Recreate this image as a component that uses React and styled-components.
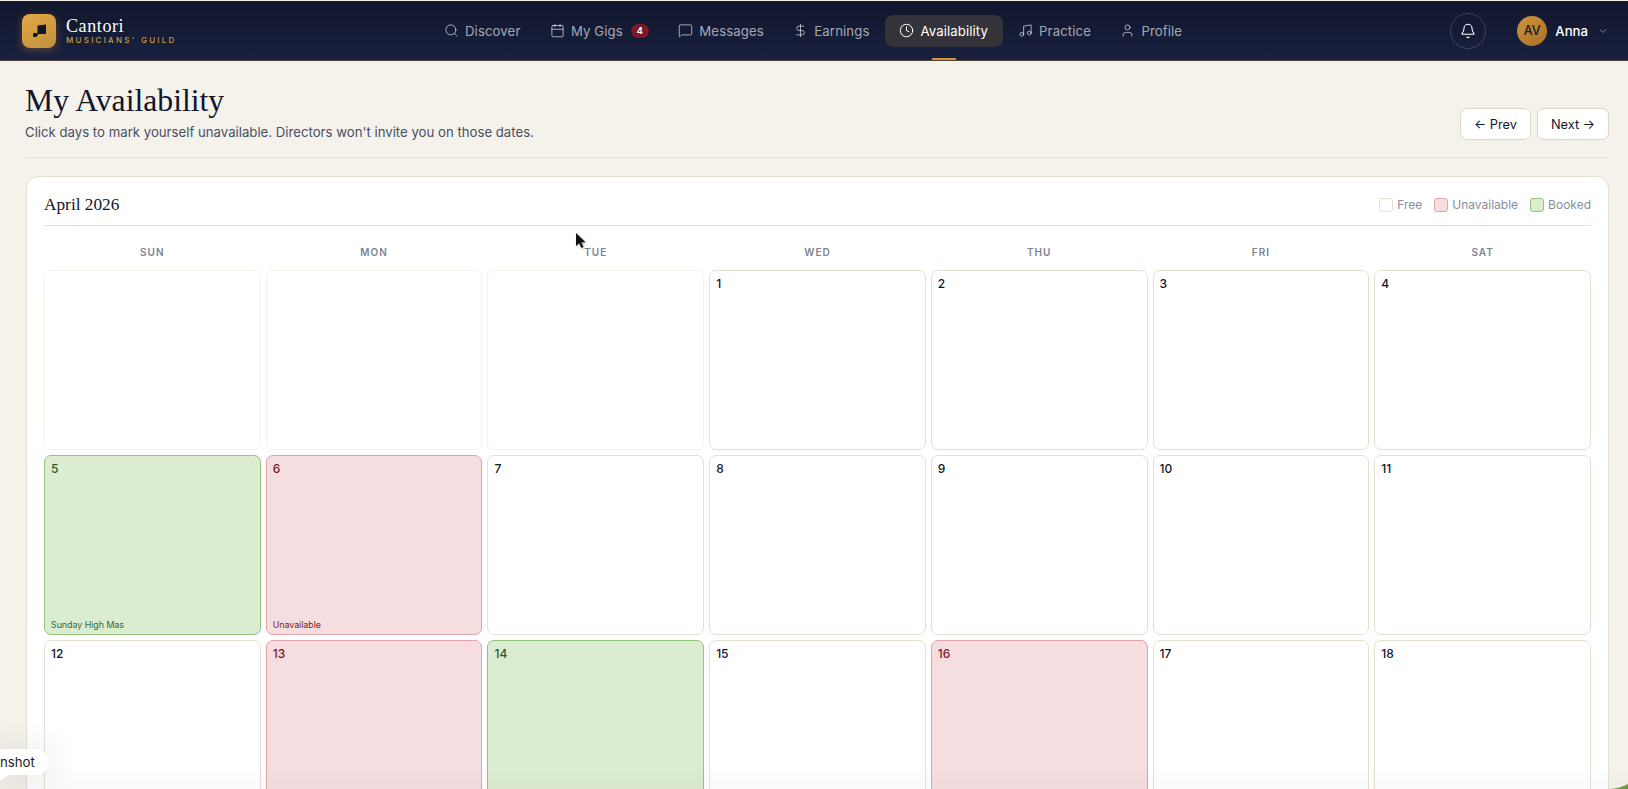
import React from 'react';
import styled, { createGlobalStyle } from 'styled-components';
import { Search, Calendar, MessageSquare, DollarSign, Clock, Music, User, Bell, ChevronDown } from 'lucide-react';

const GlobalStyle = createGlobalStyle`
  html, body {
    margin: 0;
    height: 100%;
    overflow: hidden;
    background: #f5f2eb;
    font-family: "Inter", "Liberation Sans", sans-serif;
  }
`;

const Page = styled.div`
  height: 100vh;
  overflow: hidden;
  position: relative;
`;

const NavBar = styled.header`
  height: 61px;
  box-sizing: border-box;
  padding: 0 19px 0 22px;
  display: flex;
  align-items: center;
  background: linear-gradient(180deg, #10162b 0%, #1a2140 100%);
  border-bottom: 1px solid #4d4338;
  border-top: 1px solid #f5f2eb;
`;

const Brand = styled.div`
  display: flex;
  align-items: center;
  gap: 10px;
  width: 408px;
`;

const LogoMark = styled.div`
  width: 34px;
  height: 34px;
  border-radius: 8px;
  background: linear-gradient(145deg, #e3a945, #c08f3e);
  box-shadow: 0 2px 8px rgba(201, 150, 58, 0.35);
  display: flex;
  align-items: center;
  justify-content: center;
`;

const BrandText = styled.div`
  display: flex;
  flex-direction: column;
`;

const BrandName = styled.span`
  font-family: "Liberation Serif", serif;
  font-size: 18px;
  line-height: 18px;
  color: #fff;
  letter-spacing: 0.6px;
`;

const BrandTag = styled.span`
  font-size: 8px;
  line-height: 10px;
  font-weight: 500;
  color: #d09c3e;
  letter-spacing: 2.25px;
  text-transform: uppercase;
`;

const Links = styled.nav`
  display: flex;
  align-items: center;
  gap: 1.5px;
  flex: 1;
`;

const NavLink = styled.a`
  position: relative;
  display: flex;
  align-items: center;
  gap: 6px;
  height: 32px;
  padding: 0 ${p => (p.$active ? '14.5px' : '14px')};
  border-radius: 8px;
  font-size: 13.2px;
  letter-spacing: 0.1px;
  color: ${p => (p.$active ? '#fff' : 'rgba(255,255,255,0.62)')};
  background: ${p => (p.$active ? '#343339' : 'transparent')};
`;

const ActiveBar = styled.span`
  position: absolute;
  left: 50%;
  bottom: -13px;
  width: 24px;
  height: 2px;
  margin-left: -12px;
  background: #c9963a;
`;

const CountBadge = styled.span`
  width: 18px;
  height: 14px;
  border-radius: 8px;
  background: #7b1a24;
  color: #fff;
  font-size: 9px;
  font-weight: 700;
  display: flex;
  align-items: center;
  justify-content: center;
  margin-left: 2px;
`;

const BellButton = styled.div`
  width: 36px;
  height: 36px;
  box-sizing: border-box;
  border-radius: 50%;
  border: 1px solid rgba(255, 255, 255, 0.18);
  display: flex;
  align-items: center;
  justify-content: center;
  color: #fff;
  margin-right: 31px;
`;

const UserMenu = styled.div`
  display: flex;
  align-items: center;
  gap: 8px;
  color: #fff;
  font-size: 13.2px;
  font-weight: 500;
`;

const Avatar = styled.div`
  width: 30px;
  height: 30px;
  border-radius: 50%;
  background: linear-gradient(145deg, #cf9438, #a8702a);
  color: #10162b;
  font-size: 12.5px;
  font-weight: 500;
  display: flex;
  align-items: center;
  justify-content: center;
`;

const Chevron = styled(ChevronDown)`
  margin-left: 1px;
  color: rgba(255, 255, 255, 0.45);
`;

const Content = styled.main`
  padding: 23px 19px 0 26px;
`;

const PageHeader = styled.div`
  display: flex;
  align-items: flex-end;
  justify-content: space-between;
  padding-bottom: 16px;
  border-bottom: 1px solid #e5e0d2;
  margin-bottom: 18px;
`;

const HeadingBlock = styled.div`
  margin-left: -1px;
`;

const Title = styled.h1`
  margin: 0;
  font-family: "Liberation Serif", serif;
  font-weight: 400;
  font-size: 31.7px;
  line-height: 34px;
  color: #10162b;
`;

const Subtitle = styled.p`
  margin: 5px 0 0;
  font-size: 13.2px;
  line-height: 18px;
  color: #4a4f63;
`;

const PagerRow = styled.div`
  display: flex;
  gap: 6px;
  margin-bottom: 1px;
`;

const PagerButton = styled.button`
  height: 32px;
  box-sizing: border-box;
  padding: 0 13px;
  background: #fff;
  border: 1px solid #ddd6c3;
  border-radius: 7px;
  font-family: inherit;
  font-size: 12.8px;
  color: #10162b;
`;

const Card = styled.section`
  background: #fff;
  border: 1px solid #e5e0d2;
  border-radius: 12px;
  padding: 0 17px;
`;

const CardHead = styled.div`
  height: 49px;
  display: flex;
  align-items: center;
  justify-content: space-between;
  border-bottom: 1px solid #e5e0d2;
  padding-top: 7px;
  box-sizing: border-box;
`;

const MonthTitle = styled.h2`
  margin: 0;
  font-family: "Liberation Serif", serif;
  font-weight: 400;
  font-size: 17.3px;
  color: #10162b;
`;

const Legend = styled.div`
  display: flex;
  gap: 12px;
`;

const LegendItem = styled.span`
  display: flex;
  align-items: center;
  gap: 4px;
  font-size: 12px;
  color: #8a8e9f;
`;

const tones = {
  free: { bg: '#fff', border: '#e5e0d2', text: '#10162b', note: '#10162b' },
  off: { bg: '#f5dde0', border: '#dfa5aa', text: '#7b1a24', note: '#7b1a24' },
  booked: { bg: '#dcecd0', border: '#92c47c', text: '#2a5a28', note: '#2f6b35' },
  empty: { bg: '#fff', border: '#f5f2eb', text: '#10162b', note: '#10162b' },
};

const Swatch = styled.i`
  width: 14px;
  height: 14px;
  box-sizing: border-box;
  border-radius: 3px;
  background: ${p => tones[p.$tone].bg};
  border: 1px solid ${p => tones[p.$tone].border};
`;

const WeekRow = styled.div`
  display: grid;
  grid-template-columns: repeat(7, 1fr);
  gap: 5px;
  height: 44px;
  box-sizing: border-box;
  padding-top: 7px;
  align-items: center;
`;

const WeekDay = styled.div`
  text-align: center;
  font-size: 10px;
  font-weight: 600;
  letter-spacing: 1px;
  color: #7d8296;
`;

const DayGrid = styled.div`
  display: grid;
  grid-template-columns: repeat(7, 1fr);
  grid-auto-rows: 180px;
  gap: 5px;
`;

const DayCell = styled.div`
  box-sizing: border-box;
  border-radius: 7px;
  padding: 5px 6px 4px;
  display: flex;
  flex-direction: column;
  justify-content: space-between;
  background: ${p => tones[p.$tone].bg};
  border: 1px solid ${p => tones[p.$tone].border};
  color: ${p => tones[p.$tone].text};
`;

const DayNumber = styled.span`
  font-size: 12px;
  font-weight: 500;
  line-height: 15px;
`;

const DayNote = styled.span`
  font-size: 8.8px;
  line-height: 11px;
  color: ${p => tones[p.$tone].note};
`;

const ScreenshotPill = styled.div`
  position: absolute;
  left: 0;
  top: 749px;
  height: 26px;
  padding: 0 14px 0 0;
  display: flex;
  align-items: center;
  background: #fff;
  border-radius: 0 13px 13px 0;
  font-size: 13.2px;
  color: #222;
  box-shadow: 0 0 30px 8px rgba(0, 0, 0, 0.06);

  &::after {
    content: '';
    position: absolute;
    left: 0;
    top: 100%;
    width: 9px;
    height: 6px;
    background: #fff;
    clip-path: polygon(0 0, 100% 0, 0 100%);
  }
`;

const BottomFade = styled.div`
  position: absolute;
  left: 0;
  right: 0;
  bottom: 0;
  height: 24px;
  pointer-events: none;
  background: linear-gradient(180deg, rgba(0, 0, 0, 0), rgba(0, 0, 0, 0.02));
`;

const CornerLeaf = styled.svg`
  position: absolute;
  right: 0;
  bottom: 0;
`;

const CursorMark = styled.svg`
  position: absolute;
  left: 575px;
  top: 232px;
  filter: drop-shadow(1px 1px 1px rgba(0, 0, 0, 0.35));
`;

const navItems = [
  { label: 'Discover', icon: Search },
  { label: 'My Gigs', icon: Calendar, count: 4 },
  { label: 'Messages', icon: MessageSquare },
  { label: 'Earnings', icon: DollarSign },
  { label: 'Availability', icon: Clock, active: true },
  { label: 'Practice', icon: Music },
  { label: 'Profile', icon: User },
];

const weekDays = ['SUN', 'MON', 'TUE', 'WED', 'THU', 'FRI', 'SAT'];

const marked = {
  5: { tone: 'booked', note: 'Sunday High Mas' },
  6: { tone: 'off', note: 'Unavailable' },
  13: { tone: 'off' },
  14: { tone: 'booked' },
  16: { tone: 'off' },
};

// only the rows that fit in the window
const days = [null, null, null, ...Array.from({ length: 18 }, (_, i) => i + 1)];

export default function App() {
  return (
    <Page>
      <GlobalStyle />
      <NavBar>
        <Brand>
          <LogoMark>
            <svg width="16" height="16" viewBox="0 0 16 16">
              <path d="M6.500 2.500 15 1.500V11H6.500z" fill="#10162b" />
              <path d="M6.500 10v2.500" stroke="#10162b" strokeWidth="1" />
              <circle cx="4" cy="12" r="2.200" fill="#10162b" />
            </svg>
          </LogoMark>
          <BrandText>
            <BrandName>Cantori</BrandName>
            <BrandTag>Musicians' Guild</BrandTag>
          </BrandText>
        </Brand>
        <Links>
          {navItems.map(({ label, icon: Icon, count, active }) => (
            <NavLink key={label} $active={active}>
              <Icon size={15} strokeWidth={1.6} />
              {label}
              {count && <CountBadge>{count}</CountBadge>}
              {active && <ActiveBar />}
            </NavLink>
          ))}
        </Links>
        <BellButton><Bell size={16} strokeWidth={1.6} /></BellButton>
        <UserMenu>
          <Avatar>AV</Avatar>
          Anna
          <Chevron size={12} />
        </UserMenu>
      </NavBar>
      <Content>
        <PageHeader>
          <HeadingBlock>
            <Title>My Availability</Title>
            <Subtitle>Click days to mark yourself unavailable. Directors won't invite you on those dates.</Subtitle>
          </HeadingBlock>
          <PagerRow>
            <PagerButton>← Prev</PagerButton>
            <PagerButton>Next →</PagerButton>
          </PagerRow>
        </PageHeader>
        <Card>
          <CardHead>
            <MonthTitle>April 2026</MonthTitle>
            <Legend>
              <LegendItem><Swatch $tone="free" />Free</LegendItem>
              <LegendItem><Swatch $tone="off" />Unavailable</LegendItem>
              <LegendItem><Swatch $tone="booked" />Booked</LegendItem>
            </Legend>
          </CardHead>
          <WeekRow>
            {weekDays.map(d => <WeekDay key={d}>{d}</WeekDay>)}
          </WeekRow>
          <DayGrid>
            {days.map((d, i) => (
              <DayCell key={i} $tone={d ? (marked[d]?.tone || 'free') : 'empty'}>
                <DayNumber>{d}</DayNumber>
                {d && marked[d]?.note && <DayNote $tone={marked[d].tone}>{marked[d].note}</DayNote>}
              </DayCell>
            ))}
          </DayGrid>
        </Card>
      </Content>
      <BottomFade />
      <ScreenshotPill>nshot</ScreenshotPill>
      <CornerLeaf width="17" height="5" viewBox="0 0 17 5">
        <path d="M0 5Q10 4 17 0V5z" fill="#6f9a3f" />
      </CornerLeaf>
      <CursorMark width="12" height="18" viewBox="0 0 12 18">
        <path d="M1 1v13l3.200-3 2.200 5 2-.9-2.200-4.800H10.500z" fill="#111" />
      </CursorMark>
    </Page>
  );
}
